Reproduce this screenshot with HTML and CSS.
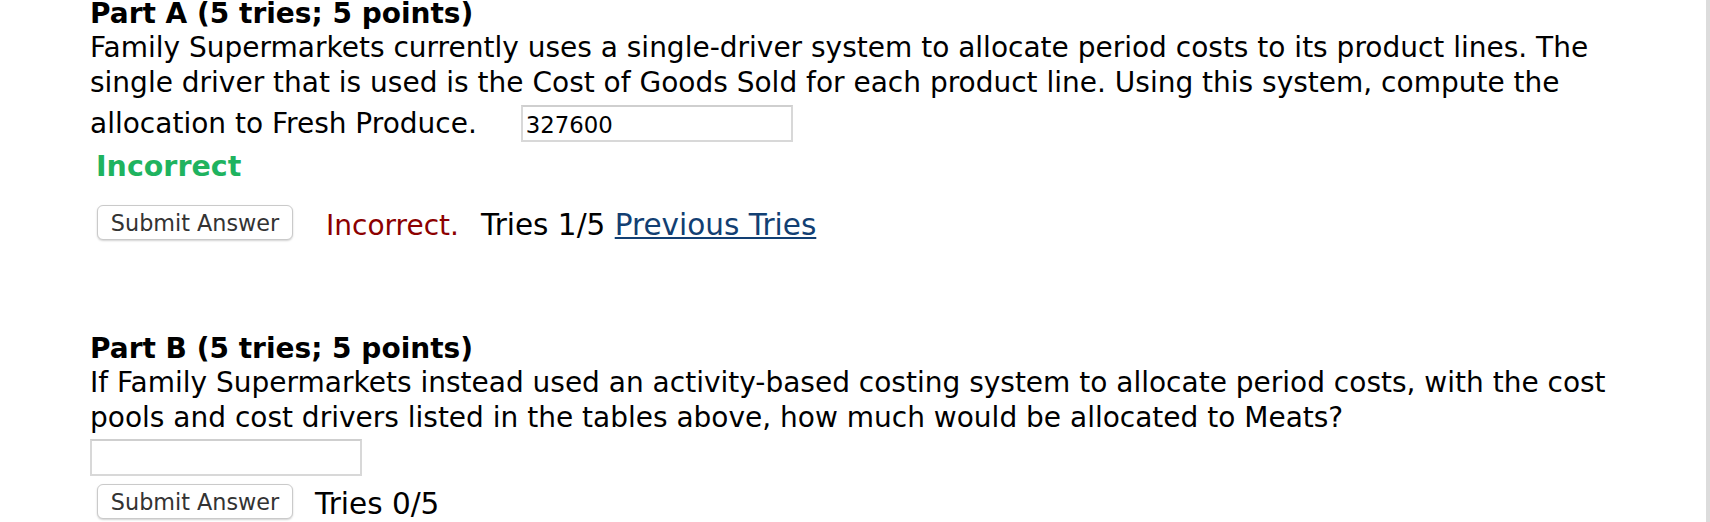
FILE: index.html
```html
<!DOCTYPE html>
<html lang="en">
<head>
<meta charset="utf-8">
<title>Problem</title>
<link rel="stylesheet" href="styles.css">
</head>
<body>
<div class="page">
  <main class="content">
    <section class="part">
      <h3 class="part-title">Part A (5 tries; 5 points)</h3>
      <p class="question">Family Supermarkets currently uses a single-driver system to allocate period costs to its product lines. The single driver that is used is the Cost of Goods Sold for each product line. Using this system, compute the allocation to Fresh Produce.<input class="answer inline" type="text" value="327600"></p>
      <div class="verdict">Incorrect</div>
      <div class="submit-row first">
        <button class="submit" type="button">Submit Answer</button>
        <span class="status-bad">Incorrect.</span>
        <span class="tries">Tries 1/5 <a href="#" class="prev">Previous Tries</a></span>
      </div>
    </section>
    <section class="part part-b">
      <h3 class="part-title">Part B (5 tries; 5 points)</h3>
      <p class="question">If Family Supermarkets instead used an activity-based costing system to allocate period costs, with the cost pools and cost drivers listed in the tables above, how much would be allocated to Meats?</p>
      <input class="answer block" type="text" value="">
      <div class="submit-row second">
        <button class="submit" type="button">Submit Answer</button>
        <span class="tries">Tries 0/5</span>
      </div>
    </section>
  </main>
  <div class="edge"></div>
</div>
</body>
</html>
```

FILE: styles.css
```css
html, body {
  margin: 0;
  padding: 0;
  background: #ffffff;
}
body {
  font-family: "DejaVu Sans", Verdana, sans-serif;
  font-size: 28px;
  color: #000;
  overflow: hidden;
}
.page {
  display: flex;
  min-height: 522px;
  width: 1710px;
}
.content {
  flex: 1;
  padding-left: 90px;
}
.edge {
  width: 4px;
  background: #dcdcdc;
}
.part {
  width: 1560px;
}
.part-title {
  margin: 0;
  font-size: 28px;
  font-weight: bold;
  line-height: 28px;
}
.question {
  margin: 2px 0 0 0;
  line-height: 35px;
}
.answer {
  box-sizing: border-box;
  width: 272px;
  height: 37px;
  border: 2px solid #d8d8d8;
  border-top-color: #cfcfcf;
  background: #fff;
  font-family: "DejaVu Sans", Verdana, sans-serif;
  font-size: 22.8px;
  color: #000;
  padding: 2px 3px 0 3px;
  margin: 0;
}
.answer.inline {
  vertical-align: baseline;
  margin-top: 5px;
  margin-left: 44px;
}
.answer.block {
  display: block;
  margin-top: 4px;
}
.verdict {
  margin-top: 7px;
  padding-left: 6px;
  font-size: 28.5px;
  font-weight: bold;
  color: #1fb35f;
  line-height: 35px;
}
.submit-row {
  display: flex;
  align-items: center;
  height: 35px;
  line-height: 35px;
}
.submit-row.first {
  margin-top: 21px;
}
.submit-row.second {
  margin-top: 8px;
}
.submit {
  box-sizing: border-box;
  width: 196px;
  height: 35px;
  margin-left: 7px;
  padding: 0;
  border: 1px solid #cacaca;
  border-radius: 6px;
  background: #ffffff;
  box-shadow: 0 1px 2px rgba(0, 0, 0, 0.18);
  font-family: "DejaVu Sans", Verdana, sans-serif;
  font-size: 22.3px;
  color: #333;
}
.status-bad {
  color: #8c0000;
  margin-left: 33px;
  padding-top: 5px;
}
.tries {
  font-size: 29.5px;
  padding-top: 5px;
}
.status-bad + .tries {
  margin-left: 22px;
}
.submit + .tries {
  margin-left: 22px;
}
.prev {
  color: #123f73;
  text-decoration: underline;
}
.part-b {
  margin-top: 95px;
}
```
